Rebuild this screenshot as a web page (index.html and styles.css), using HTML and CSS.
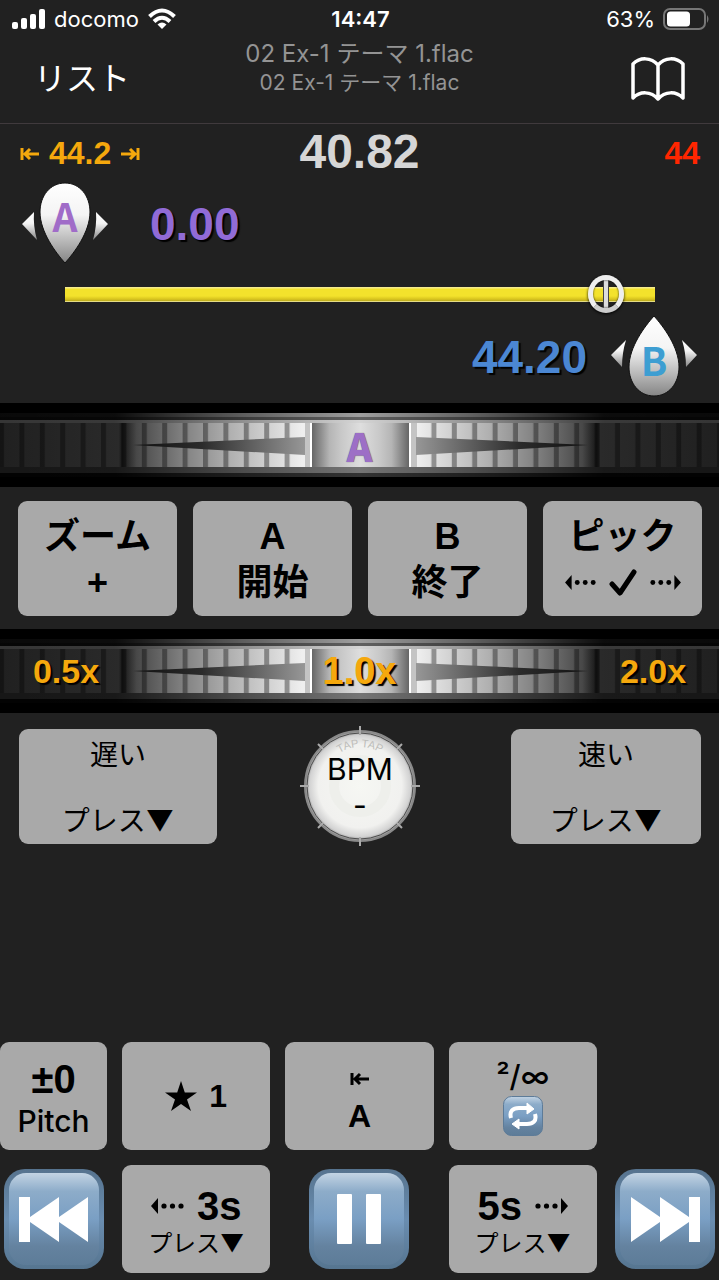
FILE: index.html
```html
<!DOCTYPE html>
<html lang="ja">
<head>
<meta charset="utf-8">
<meta name="viewport" content="width=device-width, initial-scale=1">
<title>02 Ex-1 テーマ 1.flac</title>
<link rel="stylesheet" href="styles.css">
</head>
<body>
<svg class="defs" aria-hidden="true">
  <defs>
    <linearGradient id="key" x1="0" y1="0" x2="0" y2="1"><stop offset="0" stop-color="#c3d4e4"/><stop offset=".2" stop-color="#8dacc9"/><stop offset=".5" stop-color="#7a9fc4"/><stop offset=".8" stop-color="#64829f"/><stop offset="1" stop-color="#5d7c98"/></linearGradient>
    <linearGradient id="keyEdge" x1="0" y1="0" x2="0" y2="1"><stop offset="0" stop-color="#56738e"/><stop offset=".5" stop-color="#6a8db0"/><stop offset="1" stop-color="#567590"/></linearGradient>
    <linearGradient id="drop" x1="0" y1="0" x2="0" y2="1"><stop offset="0" stop-color="#fff"/><stop offset=".4" stop-color="#f4f4f4"/><stop offset=".7" stop-color="#bdbdbd"/><stop offset="1" stop-color="#858585"/></linearGradient>
    <linearGradient id="wheel"><stop offset="0" stop-color="#202020"/><stop offset=".165" stop-color="#2a2a2a"/><stop offset=".17" stop-color="#161616"/><stop offset=".19" stop-color="#484848"/><stop offset=".25" stop-color="#7d7d7d"/><stop offset=".32" stop-color="#b0b0b0"/><stop offset=".42" stop-color="#efefef"/><stop offset=".58" stop-color="#efefef"/><stop offset=".68" stop-color="#b0b0b0"/><stop offset=".75" stop-color="#7d7d7d"/><stop offset=".81" stop-color="#484848"/><stop offset=".83" stop-color="#161616"/><stop offset=".835" stop-color="#2a2a2a"/><stop offset="1" stop-color="#202020"/></linearGradient>
    <linearGradient id="shine"><stop offset="0" stop-color="#fff" stop-opacity=".06"/><stop offset=".16" stop-color="#fff" stop-opacity=".08"/><stop offset=".34" stop-color="#fff" stop-opacity=".6"/><stop offset=".5" stop-color="#fff"/><stop offset=".66" stop-color="#fff" stop-opacity=".6"/><stop offset=".84" stop-color="#fff" stop-opacity=".08"/><stop offset="1" stop-color="#fff" stop-opacity=".06"/></linearGradient>
    <linearGradient id="hub"><stop offset="0" stop-color="#666"/><stop offset=".18" stop-color="#b5b5b5"/><stop offset=".3" stop-color="#c8c8c8"/><stop offset=".5" stop-color="#dedede"/><stop offset=".7" stop-color="#c8c8c8"/><stop offset=".82" stop-color="#b5b5b5"/><stop offset="1" stop-color="#666"/></linearGradient>
    <linearGradient id="wedge"><stop offset="0" stop-color="#111"/><stop offset=".4" stop-color="#2b2b2b"/><stop offset="1" stop-color="#979797"/></linearGradient>
    <pattern id="ticks" x="-1" y="0" width="20.4" height="84" patternUnits="userSpaceOnUse"><rect width="5" height="84" fill="#000" fill-opacity=".36"/></pattern>
    <symbol id="jog" viewBox="0 0 719 84" preserveAspectRatio="none">
      <rect width="719" height="84" fill="#000"/>
      <rect y="10" width="719" height="4" fill="url(#shine)" opacity=".62"/>
      <rect y="14" width="719" height="3" fill="url(#shine)" opacity=".38"/>
      <rect y="17" width="719" height="3" fill="#2c2c2c"/>
      <rect y="17" width="719" height="3" fill="url(#shine)" opacity=".8"/>
      <rect y="20" width="719" height="44" fill="url(#wheel)"/>
      <rect y="20" width="312" height="44" fill="url(#ticks)"/>
      <rect y="20" width="312" height="44" fill="url(#ticks)" transform="matrix(-1 0 0 1 721 0)"/>
      <rect y="64" width="719" height="6" fill="#111"/>
      <rect y="64" width="719" height="6" fill="url(#shine)" opacity=".42"/>
      <rect y="70" width="719" height="4" fill="url(#shine)" opacity=".2"/>
      <rect x="305" y="20" width="6" height="44" fill="#c4c4c4"/><rect x="411" y="20" width="6" height="44" fill="#c4c4c4"/>
      <rect x="310" y="20" width="101" height="44" fill="#fff"/>
      <rect x="312" y="20" width="97" height="44" fill="url(#hub)"/>
      <path d="M133 42 305 34V52Z" fill="url(#wedge)"/>
      <path d="M133 42 305 34V52Z" fill="url(#wedge)" transform="matrix(-1 0 0 1 721 0)"/>
    </symbol>
    <symbol id="to-start" viewBox="0 0 20 14"><path d="M3 1V13M5 7H20M11 2 6 7 11 12" fill="none" stroke="currentColor" stroke-width="3"/></symbol>
    <symbol id="dots-left" viewBox="0 0 34 16"><path d="M0 8 7 0V16Z"/><circle cx="13" cy="8" r="2.6"/><circle cx="21.500" cy="8" r="2.6"/><circle cx="30" cy="8" r="2.6"/></symbol>
  </defs>
</svg>
<main class="app">
  <div class="status">
    <div class="status-left">
      <svg width="34" height="22" viewBox="0 0 34 22" fill="#fff"><rect x="0" y="14" width="6" height="7" rx="2"/><rect x="9" y="10" width="6" height="11" rx="2"/><rect x="18" y="6" width="6" height="15" rx="2"/><rect x="27" y="1" width="6" height="20" rx="2"/></svg>
      <span>docomo</span>
      <svg width="30" height="22" viewBox="0 0 30 22" fill="none" stroke="#fff" stroke-width="4"><path d="M2.500 8.500Q15-3.500 27.500 8.500"/><path d="M7 13.500Q15 6 23 13.500"/><path d="M15 21 10.500 16.500Q15 12.500 19.500 16.500Z" fill="#fff" stroke="none"/></svg>
    </div>
    <time class="clock">14:47</time>
    <div class="status-right">
      <span>63%</span>
      <svg width="46" height="22" viewBox="0 0 46 22"><rect x="1" y="1" width="41" height="20" rx="6" fill="none" stroke="#777" stroke-width="2"/><rect x="4" y="3.500" width="23" height="15" rx="3.500" fill="#fff"/><path d="M44 7q3 4 0 8Z" fill="#777"/></svg>
    </div>
  </div>
  <header class="header">
    <button class="list-button" type="button">リスト</button>
    <div class="titles"><h1>02 Ex-1 テーマ 1.flac</h1><p>02 Ex-1 テーマ 1.flac</p></div>
    <button class="book-button" type="button" aria-label="ブック"><svg width="54" height="44" viewBox="0 0 54 44" fill="none" stroke="#fff" stroke-width="3.500" stroke-linejoin="round"><path d="M27 8C20 0 9 0 2 7V41C9 34 20 34 27 42C34 34 45 34 52 41V7C45 0 34 0 27 8V42"/></svg></button>
  </header>
  <section class="times">
    <div class="length"><svg width="20" height="14"><use href="#to-start"/></svg><span>44.2</span><svg class="flip" width="20" height="14"><use href="#to-start"/></svg></div>
    <output class="current">40.82</output>
    <span class="total">44</span>
  </section>
  <div class="marker marker-a">
    <button class="pin" type="button" aria-label="A"><svg width="94" height="84" viewBox="0 0 94 84"><path d="M47 1C62 1 72 14 72 30C72 50 56 71 47 81C38 71 22 50 22 30C22 14 32 1 47 1Z" fill="url(#drop)" stroke="#111"/><path d="M4 42 16 30Q15 44 19 58ZM90 42 78 30Q79 44 75 58Z" fill="url(#drop)"/><text class="pin-letter purple" x="47" y="50">A</text></svg></button>
    <output class="marker-time purple">0.00</output>
  </div>
  <div class="seek"><input type="range" min="0" max="100" step="0.1" value="94.4" aria-label="再生位置"></div>
  <div class="marker marker-b">
    <output class="marker-time blue">44.20</output>
    <button class="pin" type="button" aria-label="B"><svg width="94" height="84" viewBox="0 0 94 84"><path d="M47 1C56 11 72 32 72 52C72 68 62 81 47 81C32 81 22 68 22 52C22 32 38 11 47 1Z" fill="url(#drop)" stroke="#111"/><path d="M4 40 19 25Q15 38 15 52ZM90 40 75 25Q79 38 79 52Z" fill="url(#drop)"/><text class="pin-letter cyan" x="47" y="61">B</text></svg></button>
  </div>
  <div class="jog"><svg class="jog-art" width="100%" height="84"><use href="#jog"/></svg><div class="jog-labels"><span></span><b class="jog-letter">A</b><span></span></div></div>
  <section class="actions">
    <button class="tile" type="button"><span>ズーム</span><span>+</span></button>
    <button class="tile" type="button"><span>A</span><span>開始</span></button>
    <button class="tile" type="button"><span>B</span><span>終了</span></button>
    <button class="tile" type="button"><span>ピック</span><span class="pick"><svg width="32" height="15"><use href="#dots-left"/></svg><svg width="28" height="28" viewBox="0 0 28 28" fill="none" stroke="#000" stroke-width="5" stroke-linecap="round" stroke-linejoin="round"><path d="M3 15 11 24 25 3"/></svg><svg class="flip" width="32" height="15"><use href="#dots-left"/></svg></span></button>
  </section>
  <div class="jog"><svg class="jog-art" width="100%" height="84"><use href="#jog"/></svg><div class="jog-labels"><span>0.5x</span><b class="speed">1.0x</b><span>2.0x</span></div></div>
  <section class="tempo">
    <button class="tile press slow" type="button"><span>遅い</span><span>プレス▼</span></button>
    <button class="bpm" type="button"><svg class="bpm-dial" width="120" height="120" viewBox="-60 -60 120 120" aria-hidden="true">
      <defs><radialGradient id="dial"><stop offset="0" stop-color="#f6f7f3"/><stop offset=".76" stop-color="#f1f1ef"/><stop offset=".92" stop-color="#d2d2d2"/><stop offset="1" stop-color="#8a8a8a"/></radialGradient><path id="arc" d="M-39 0A39 39 0 0 1 39 0"/></defs>
      <circle r="55" fill="url(#dial)" stroke="#8a8a8a" stroke-width="2"/><circle r="53" fill="none" stroke="#4c4c4c"/>
      <circle r="26" fill="none" stroke="#eeefeb" stroke-width="10"/>
      <path d="M0-60V-51M0 60V51M-60 0H-51M60 0H51M-42-42-37-37M42 42 37 37M-42 42-37 37M42-42 37-37" stroke="#aaa" stroke-width="2"/>
      <text class="tap"><textPath href="#arc" startOffset="50%">TAP TAP</textPath></text></svg>
      <span class="bpm-text"><span>BPM</span><span>-</span></span></button>
    <button class="tile press fast" type="button"><span>速い</span><span>プレス▼</span></button>
  </section>
  <section class="transport">
    <button class="tile" type="button"><span class="big">±0</span><span class="pitch">Pitch</span></button>
    <button class="tile favorite" type="button"><span class="inline star"><svg width="32" height="30" viewBox="0 0 32 30"><path d="M16 0 19.800 11.500H32L22 18.500 26 30 16 23 6 30 10 18.500 0 11.500H12.200Z"/></svg><span>1</span></span></button>
    <button class="tile to-a" type="button"><svg width="20" height="14"><use href="#to-start"/></svg><span>A</span></button>
    <button class="tile loop" type="button"><span>²/∞</span><svg width="40" height="40" viewBox="0 0 40 40"><rect x=".5" y=".5" width="39" height="39" rx="8" fill="url(#key)" stroke="#5d7b98"/><path d="M8 22C6 15 10 12 16 12H25M32 18C34 25 30 28 24 28H15" fill="none" stroke="#fff" stroke-width="4"/><path d="M24 7V18L31 13ZM16 23V33L9 28Z" fill="#fff" stroke="#fff"/></svg></button>
    <span></span>
    <button class="key" type="button" aria-label="前へ"><svg width="100" height="100" viewBox="0 0 100 100"><rect width="100" height="100" rx="21" fill="url(#keyEdge)"/><rect x="5" y="4" width="90" height="92" rx="17" fill="url(#key)"/><path d="M15 28H26V48L55 28V48L84 28V73L55 53V73L26 53V73H15Z" fill="#fff"/></svg></button>
    <button class="tile" type="button"><span class="inline"><svg width="34" height="16"><use href="#dots-left"/></svg><span class="big">3s</span></span><span class="small">プレス▼</span></button>
    <button class="key" type="button" aria-label="一時停止"><svg width="100" height="100" viewBox="0 0 100 100"><rect width="100" height="100" rx="21" fill="url(#keyEdge)"/><rect x="5" y="4" width="90" height="92" rx="17" fill="url(#key)"/><rect x="28" y="25" width="15" height="50" rx="1" fill="#fff"/><rect x="57" y="25" width="15" height="50" rx="1" fill="#fff"/></svg></button>
    <button class="tile" type="button"><span class="inline"><span class="big">5s</span><svg class="flip" width="34" height="16"><use href="#dots-left"/></svg></span><span class="small">プレス▼</span></button>
    <button class="key" type="button" aria-label="次へ"><svg class="flip" width="100" height="100" viewBox="0 0 100 100"><rect width="100" height="100" rx="21" fill="url(#keyEdge)"/><rect x="5" y="4" width="90" height="92" rx="17" fill="url(#key)"/><path d="M15 28H26V48L55 28V48L84 28V73L55 53V73L26 53V73H15Z" fill="#fff"/></svg></button>
  </section>
</main>
</body>
</html>
```
FILE: styles.css
```css
* { box-sizing: border-box; }
body {
  margin: 0;
  background: #212121;
  color: #fff;
  font-family: Inter, "Noto Sans CJK JP", sans-serif;
}
button {
  margin: 0;
  padding: 0;
  border: 0;
  background: none;
  color: inherit;
  font: inherit;
}
svg { display: block; flex: none; }
h1, p { margin: 0; font-weight: 400; }
.defs { position: absolute; width: 0; height: 0; }
.flip { transform: scaleX(-1); }
.app { display: flex; flex-direction: column; min-height: 100vh; }

.status {
  display: grid;
  grid-template-columns: 1fr auto 1fr;
  align-items: center;
  height: 38px;
  padding: 0 10px 0 12px;
  font-size: 22px;
}
.status-left, .status-right { display: flex; align-items: center; gap: 8px; }
.status-right { justify-content: flex-end; }
.clock { font-weight: 600; }

.header {
  display: grid;
  grid-template-columns: 1fr auto 1fr;
  align-items: center;
  height: 86px;
  padding: 0 34px 4px;
  border-bottom: 1px solid #403a3d;
}
.list-button { justify-self: start; font-size: 32px; font-weight: 400; line-height: 40px; }
.book-button { justify-self: end; }
.titles { align-self: start; text-align: center; color: #949494; }
.titles h1 { font-size: 24px; line-height: 32px; }
.titles p { font-size: 21px; line-height: 26px; }

.times {
  display: grid;
  grid-template-columns: 1fr auto 1fr;
  align-items: center;
  height: 58px;
  padding: 0 19px;
  font: 700 32px "Liberation Sans", sans-serif;
}
.length { display: flex; align-items: center; gap: 10px; color: #f5a80d; }
.current { padding-bottom: 4px; color: #d6d6d6; font-size: 48px; }
.total { justify-self: end; color: #ff2600; }

.marker { display: flex; align-items: center; height: 84px; padding: 0 18px; }
.marker-a { gap: 38px; }
.marker-b { justify-content: flex-end; gap: 20px; height: 88px; padding-bottom: 4px; }
.marker-time { font: 700 46px "Liberation Sans", sans-serif; text-shadow: 2px 2px 1px #000; }
.pin-letter { font: 700 39px "Noto Sans CJK JP", sans-serif; text-anchor: middle; }
.purple { color: #916bd6; }
.blue { color: #4b87d3; }
.pin-letter.purple { fill: #a06cc8; }
.pin-letter.cyan { fill: #3d9ed2; }

.seek { margin-top: 8px; padding: 0 64px 0 65px; }
.seek input {
  display: block;
  width: 100%;
  height: 41px;
  margin: 0;
  background: none;
  appearance: none;
}
.seek input::-webkit-slider-runnable-track {
  height: 15px;
  background: linear-gradient(#f5eb8a 0 1px, #f3e22c 2px 9px, #d9c51e 12px, #bcab20 14px, #e5dc84 14px);
}
.seek input::-webkit-slider-thumb {
  width: 36px;
  height: 38px;
  margin-top: -12px;
  border: 5px solid #eee;
  border-bottom-color: #ccc;
  border-radius: 50%;
  background: linear-gradient(90deg, transparent 10px, #444 10px 11px, #ddd 11px 15px, #444 15px 16px, transparent 16px);
  box-shadow: 0 1px 3px #000, inset 0 0 2px #000;
  appearance: none;
}

.jog { display: grid; height: 84px; }
.jog-art, .jog-labels { grid-area: 1 / 1; }
.jog-labels {
  display: grid;
  grid-template-columns: 132px 1fr 132px;
  align-items: center;
  justify-items: center;
  color: #f5a80d;
  font: 700 34px "Liberation Sans", sans-serif;
  text-shadow: 2px 2px 1px #000;
}
.speed { font-size: 38px; }
.jog-letter {
  color: #9d6fc6;
  font-family: "Noto Sans CJK JP", sans-serif;
  font-size: 39px;
  line-height: 44px;
  text-shadow: 0 0 1px #555;
}

.tile {
  display: flex;
  flex-direction: column;
  align-items: center;
  justify-content: center;
  border-radius: 9px;
  background: #a9a9a9;
  color: #000;
}
.actions {
  display: grid;
  grid-template-columns: repeat(4, 1fr);
  gap: 16px;
  padding: 14px 17px 13px 18px;
}
.actions .tile {
  height: 115px;
  padding-top: 2px;
  font: 700 36px "Liberation Sans", "Noto Sans CJK JP", sans-serif;
  line-height: 46px;
}
.pick { display: flex; align-items: center; gap: 12px; height: 46px; }

.tempo {
  display: grid;
  grid-template-columns: 1fr auto 1fr;
  align-items: center;
  padding: 13px 18px 0 19px;
}
.press {
  justify-content: space-between;
  height: 115px;
  padding: 10px 0 6px;
  font-size: 28px;
  line-height: 33px;
}
.slow { width: 198px; }
.fast { justify-self: end; width: 190px; }
.bpm { display: grid; place-items: center; }
.bpm-dial, .bpm-text { grid-area: 1 / 1; }
.bpm-text {
  display: flex;
  flex-direction: column;
  padding-top: 2px;
  color: #000;
  font-size: 30px;
  line-height: 36px;
}
.tap { fill: #bdbdba; font: 400 11px "Liberation Sans", sans-serif; text-anchor: middle; }

.transport {
  display: grid;
  grid-template-columns: 107fr 148fr 148fr 148fr 107fr;
  grid-auto-rows: 108px;
  gap: 15px;
  margin-top: auto;
  padding-bottom: 7px;
}
.transport .tile { padding-top: 6px; }
.big { font: 700 40px "Liberation Sans", sans-serif; line-height: 44px; }
.pitch { font-size: 30px; font-weight: 500; line-height: 40px; }
.small { font-size: 24px; line-height: 32px; }
.inline { display: flex; align-items: center; gap: 12px; }
.star, .to-a { font: 700 32px "Liberation Sans", sans-serif; }
.star { line-height: 30px; }
.transport .favorite { padding-top: 0; }
.to-a { gap: 12px; }
.transport .to-a { padding-top: 14px; }
.transport .loop { padding-top: 0; font-size: 30px; font-weight: 500; line-height: 40px; }
.key { display: grid; place-items: center; }
```
